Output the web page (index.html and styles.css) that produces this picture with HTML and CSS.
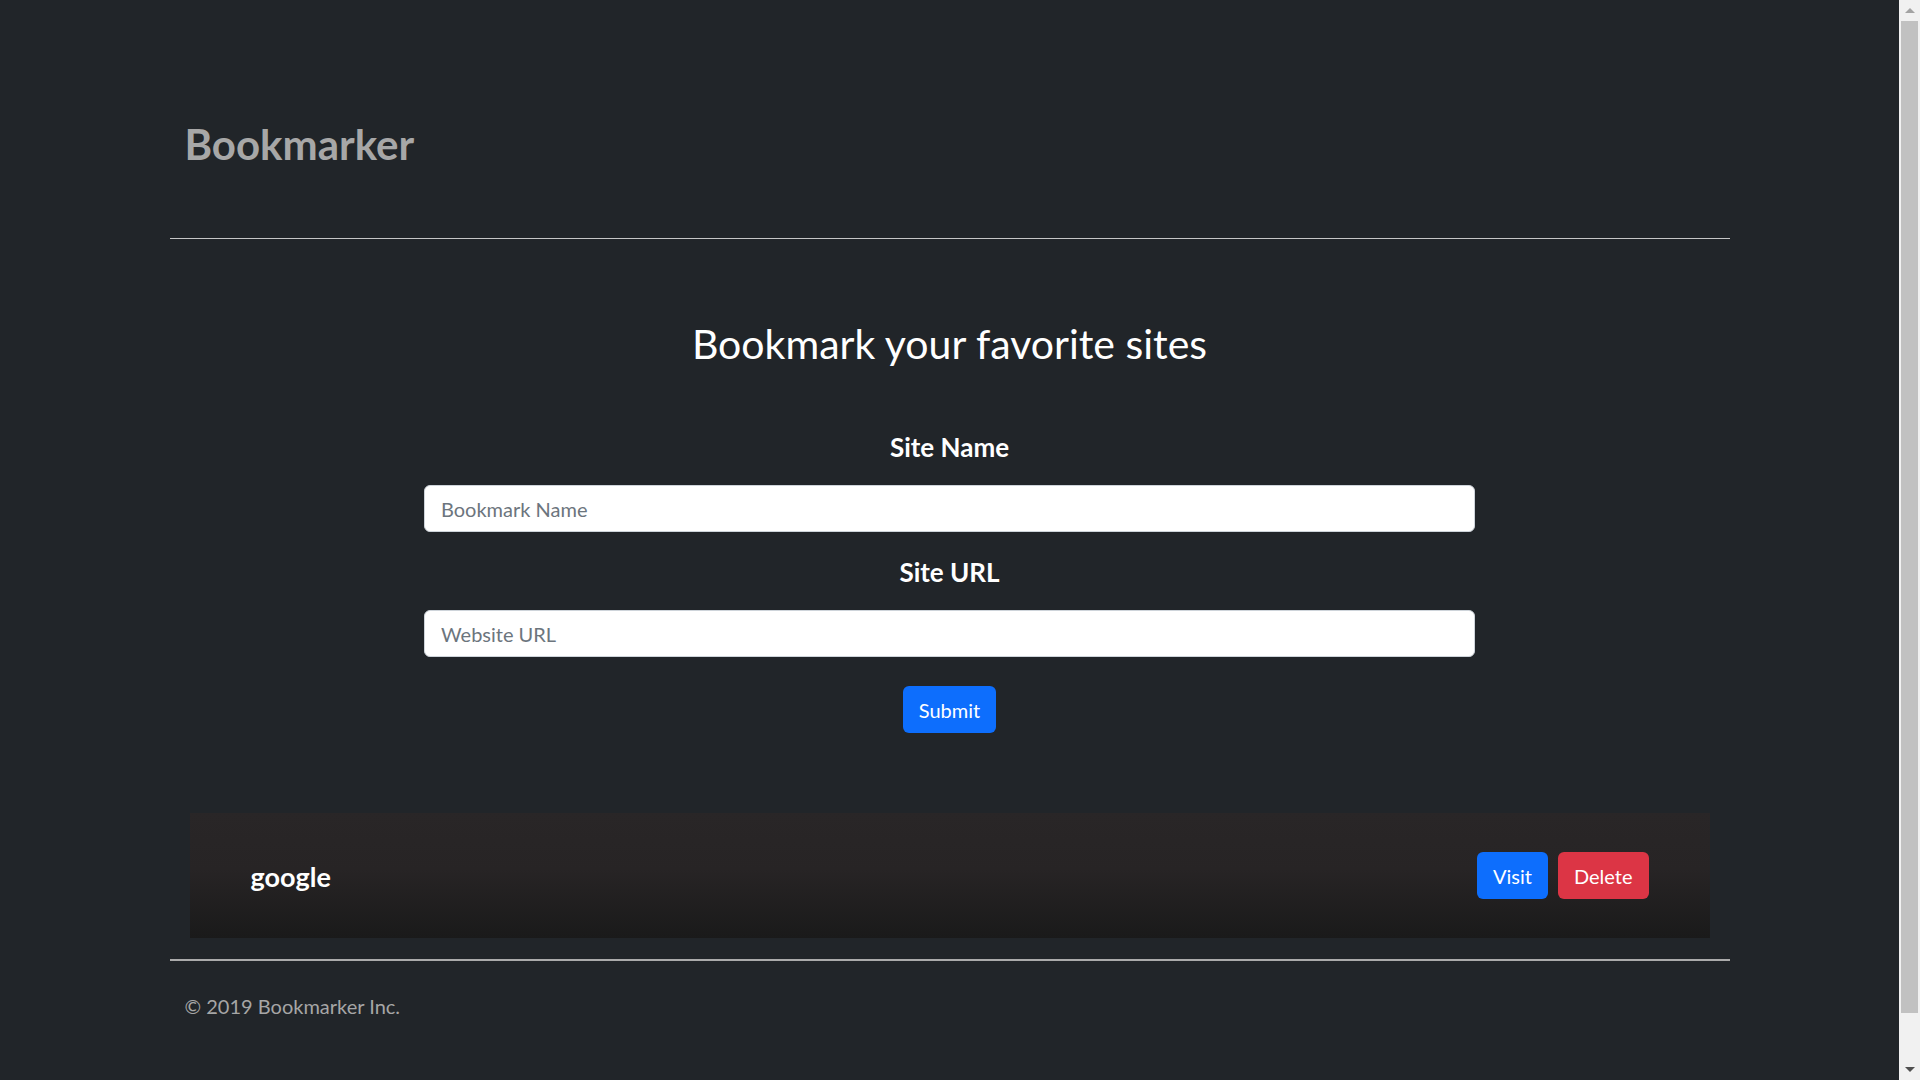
FILE: index.html
```html
<!DOCTYPE html>
<html lang="en">
<head>
<meta charset="utf-8">
<title>Bookmarker</title>
<link rel="stylesheet" href="styles.css">
</head>
<body>
<div class="container">
  <header class="header">
    <h3 class="brand">Bookmarker</h3>
  </header>
  <hr class="rule-top">
  <main class="main">
    <h1 class="lead-title">Bookmark your favorite sites</h1>
    <form class="form" onsubmit="return false">
      <label class="label" for="siteName">Site Name</label>
      <input class="field" id="siteName" type="text" placeholder="Bookmark Name">
      <label class="label label-url" for="siteUrl">Site URL</label>
      <input class="field" id="siteUrl" type="text" placeholder="Website URL">
      <button class="btn btn-primary btn-submit" type="submit">Submit</button>
    </form>
    <section class="bookmarks">
      <div class="bookmark">
        <h3 class="bookmark-name">google</h3>
        <div class="bookmark-actions">
          <a class="btn btn-primary" href="#">Visit</a>
          <a class="btn btn-danger" href="#">Delete</a>
        </div>
      </div>
    </section>
  </main>
  <hr class="rule-bottom">
  <footer class="footer">
    <p class="copy">&copy; 2019 Bookmarker Inc.</p>
  </footer>
</div>
<div class="scrollbar" aria-hidden="true">
  <div class="sb-button"><span class="sb-arrow-up"></span></div>
  <div class="sb-track"><div class="sb-thumb"></div></div>
  <div class="sb-button"><span class="sb-arrow-down"></span></div>
</div>
</body>
</html>
```
FILE: styles.css
```css
html, body {
  margin: 0;
  padding: 0;
}
html {
  background: #212529;
}
body {
  margin-right: 21px;
  background: #212529;
  font-family: Lato, "Open Sans", sans-serif;
  color: #fff;
  line-height: 1.2;
}
.container {
  width: 1560px;
  margin: 0 auto;
}
.header {
  padding: 120px 15px 70px;
}
.brand {
  margin: 0;
  font-size: 42px;
  font-weight: 700;
  line-height: 48px;
  color: #a7a7a7;
}
.rule-top {
  margin: 0;
  border: 0;
  border-top: 1px solid #c6c6c6;
  height: 0;
}
.main {
  display: flex;
  flex-direction: column;
  align-items: center;
}
.lead-title {
  margin: 81px 0 0;
  font-size: 41px;
  font-weight: 400;
  line-height: 48px;
  color: #fff;
}
.form {
  display: flex;
  flex-direction: column;
  align-items: center;
  width: 1051px;
  margin-top: 64px;
}
.label {
  font-size: 26px;
  font-weight: 700;
  line-height: 31px;
  color: #fff;
}
.label-url {
  margin-top: 25px;
}
.field {
  box-sizing: border-box;
  width: 100%;
  height: 47px;
  margin-top: 22px;
  padding: 0 16px;
  border: 1px solid #ced4da;
  border-radius: 6px;
  background: #fff;
  font-family: Lato, "Open Sans", sans-serif;
  font-size: 20px;
  color: #212529;
}
.field::placeholder {
  color: #6c757d;
}
.btn {
  display: inline-flex;
  align-items: center;
  justify-content: center;
  box-sizing: border-box;
  height: 47px;
  padding: 0 16px;
  border: 0;
  border-radius: 6px;
  font-family: Lato, "Open Sans", sans-serif;
  font-size: 20px;
  color: #fff;
  text-decoration: none;
  cursor: pointer;
}
.btn-primary {
  background: #0d6efd;
}
.btn-danger {
  background: #dc3545;
}
.btn-submit {
  margin-top: 29px;
}
.bookmarks {
  align-self: stretch;
  margin: 80px 20px 0;
}
.bookmark {
  display: flex;
  align-items: center;
  justify-content: space-between;
  box-sizing: border-box;
  height: 125px;
  padding: 0 61px;
  background: linear-gradient(to bottom, #292627 0%, #272425 45%, #1a1a1a 100%);
}
.bookmark-name {
  margin: 4px 0 0;
  font-size: 27px;
  font-weight: 700;
  color: #fff;
}
.bookmark-actions {
  display: flex;
  gap: 10px;
}
.rule-bottom {
  margin: 21px 0 0;
  border: 0;
  border-top: 2px solid #ababab;
  height: 0;
}
.footer {
  padding: 33px 15px 112px;
}
.copy {
  margin: 0;
  font-size: 20px;
  line-height: 24px;
  color: #a6a6a6;
}

/* fake classic scrollbar overlaying the right edge */
.scrollbar {
  position: fixed;
  top: 0;
  right: 0;
  width: 21px;
  height: 100vh;
  display: flex;
  flex-direction: column;
  background: #f1f1f1;
}
.sb-button {
  height: 21px;
  flex: none;
  display: flex;
  align-items: center;
  justify-content: center;
}
.sb-arrow-up {
  width: 0;
  height: 0;
  border-left: 5px solid transparent;
  border-right: 5px solid transparent;
  border-bottom: 5px solid #a3a3a3;
}
.sb-arrow-down {
  width: 0;
  height: 0;
  border-left: 5px solid transparent;
  border-right: 5px solid transparent;
  border-top: 5px solid #505050;
}
.sb-track {
  flex: 1;
  padding: 0 2px;
}
.sb-thumb {
  height: 992px;
  background: #c1c1c1;
}
```
